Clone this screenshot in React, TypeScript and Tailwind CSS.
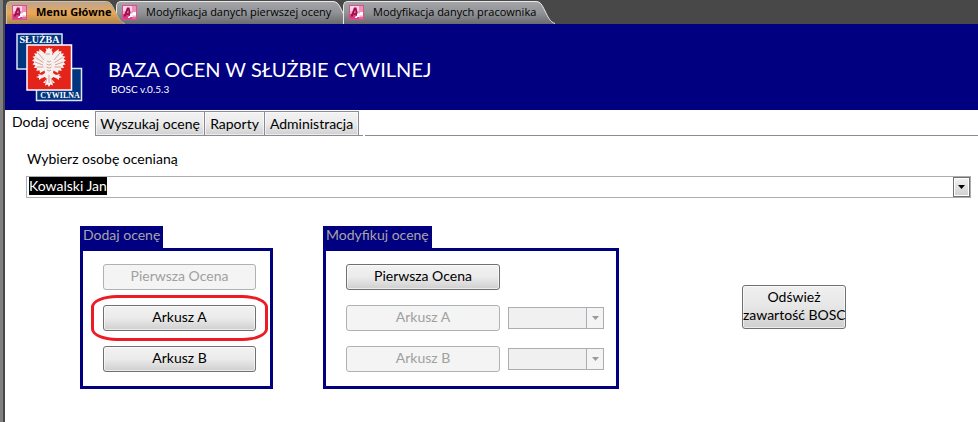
import React from "react";

const font = "font-['Lato','Liberation_Sans',sans-serif]";

function AccessIcon() {
  return (
    <svg width="15" height="15" viewBox="0 0 15 15" className="shrink-0" aria-hidden="true">
      <rect x="0.500" y="0.500" width="14" height="14" fill="#f7a8cc" stroke="#d8508c" />
      <path d="M1 1h13v5H1z" fill="#fbd3e5" />
      <path d="M1 9h9v5H1z" fill="#d93f86" />
      <path d="M10 1h4v6h-4z" fill="#f08fbb" />
      <path fillRule="evenodd" d="M1.500 11.500 5 2.500h2.500l1.800 9H7L6.700 9.700H4.500L3.800 11.500zM5.100 8h1.400L6.200 5z" fill="#a30f4e" />
      <path d="M8 8.500h2.500l1-1.500H14v3.500h-2.500l-1-.5v2H8.500l-1 1H6v-1l2-1.500z" fill="#fff" />
      <path d="M10 12h4v2h-4z" fill="#e06aa0" />
    </svg>
  );
}

type DocTabProps = { label: string; active?: boolean; width: string };

function DocTab({ label, active, width }: DocTabProps) {
  const id = active ? "tab-on" : "tab-off";
  return (
    <button type="button" className={`relative flex h-[23px] items-center gap-2 pl-[6px] ${width} ${active ? "z-10" : ""}`}>
      <span className="absolute inset-0 flex" aria-hidden="true">
        <span
          className={`flex-1 rounded-tl-[5px] border-t border-l ${
            active
              ? "border-[#d8c0a0] bg-linear-to-b from-[#b8a490] via-[#eda850] to-[#a98658]"
              : "border-[#e8e8e8] bg-linear-to-b from-[#a5a5a8] via-[#909296] to-[#6a6b6e]"
          }`}
        />
        <svg width="20" height="23" viewBox="0 0 20 23">
          <defs>
            <linearGradient id={id} x1="0" y1="0" x2="0" y2="1">
              <stop offset="0" stopColor={active ? "#b8a490" : "#a5a5a8"} />
              <stop offset="0.5" stopColor={active ? "#eda850" : "#909296"} />
              <stop offset="1" stopColor={active ? "#a98658" : "#6a6b6e"} />
            </linearGradient>
          </defs>
          <path d="M0 0C6 0 7 4 10 10S15 21 20 23H0z" fill={`url(#${id})`} />
          <path d="M0 .5C6 .5 7 4 10 10S15 21 20 22.500" fill="none" stroke={active ? "#c8b090" : "#e8e8e8"} />
        </svg>
      </span>
      <span className="relative flex items-center gap-[9px]">
        <AccessIcon />
        <span className={`font-['Open_Sans','Noto_Sans',sans-serif] text-[11px] whitespace-nowrap text-black ${active ? "font-bold" : ""}`}>
          {label}
        </span>
      </span>
    </button>
  );
}

function Emblem() {
  return (
    <svg width="68" height="70" viewBox="0 0 68 70" className="shrink-0" role="img" aria-label="Służba Cywilna">
      <rect x="1" y="1" width="45" height="35" fill="#003580" stroke="#dce6f2" strokeWidth="1.500" />
      <rect x="20.500" y="35.500" width="45" height="32" fill="#003580" stroke="#dce6f2" strokeWidth="1.500" />
      <rect x="11" y="12" width="44.500" height="45" fill="#e4231b" stroke="#fff" strokeWidth="1.500" />
      <g id="eagle" fill="#f6f1ef">
        <path d="M30.500 17.500 29.500 15l2 1 1.500-1.500L34.500 16l2-1-1 2.500c1.500 1 1.500 3 .5 4.500v4h-6v-4l-2.500-.5 2-1.500c-.2-1 0-1.800 1-2.500z" />
        <path d="M31 25c-1-4-4-7-8-9l.5 2.500-3-.5.5 2.500-3 0 1.500 2.500-3 .8 2 2-2.500 1.700 2.500 1.500-2 2.500 2.800.8-1.300 2.700 3 0-.6 3 3-.8.6 2.800 5.500-3z" />
        <path d="M35 25c1-4 4-7 8-9l-.5 2.500 3-.5-.5 2.500 3 0-1.500 2.500 3 .8-2 2 2.500 1.700-2.500 1.500 2 2.500-2.800.8 1.300 2.700-3 0 .6 3-3-.8-.6 2.800-5.500-3z" />
        <path d="M29 24h8l1.500 8-1.500 8 3 2 4-1-1 2 3 1-3 1 0 2-3-2-3-1-1.500 2 3.500 4-2.500 0 .5 2.500-2.500-1L33 54l-1.500-2.500-2.500 1 .5-2.500-2.500 0 3.500-4-1.500-2-3 1-3 2 0-2-3-1 3-1-1-2 4 1 3-2-1.500-8z" />
      </g>
      <g fill="none" stroke="#d08c84" strokeWidth="0.800">
        <path d="M22 20l6 7M19.500 24.500l8 5M19 29l8 3M20.500 34l7 0M44 20l-6 7M46.500 24.500l-8 5M47 29l-8 3M45.500 34l-7 0" />
        <path d="M31 28l2 1 2-1M30.500 31l2.500 1.200 2.500-1.200M30.500 34l2.500 1.200 2.500-1.200M31 37l2 1 2-1M33 42v8M31 45l-1.500 5M35 45l1.500 5M30 21h4" />
      </g>
      <text x="23.500" y="9.500" textAnchor="middle" fill="#fff" className="font-['Liberation_Serif',serif] text-[10px] font-bold">SŁUŻBA</text>
      <text x="44" y="65" textAnchor="middle" fill="#fff" className="font-['Liberation_Serif',serif] text-[8px] font-bold">CYWILNA</text>
    </svg>
  );
}

type FormButtonProps = { label: string; disabled?: boolean };

function FormButton({ label, disabled }: FormButtonProps) {
  return (
    <button
      type="button"
      disabled={disabled}
      className={`block h-[26px] w-full rounded-[3px] border pb-[2px] text-center text-sm leading-none ${
        disabled
          ? "border-[#adb2b5] bg-[#f4f4f4] text-[#a0a0a0]"
          : "border-[#707070] bg-linear-to-b from-[#f2f2f2] from-0% via-[#ebebeb] via-50% to-[#cfcfcf] text-black inset-ring inset-ring-white/60"
      }`}
    >
      {label}
    </button>
  );
}

function VersionSelect({ label }: { label: string }) {
  return (
    <div className="relative">
      <select disabled aria-label={label} className="block h-[22px] w-24 appearance-none border border-[#abadb3] bg-[#f0f0f0]" />
      <span className="pointer-events-none absolute inset-y-0 right-0 flex w-[18px] items-center justify-center border border-[#abadb3] bg-[#f4f4f4]">
        <svg width="7" height="4" viewBox="0 0 7 4"><path d="M0 0h7L3.500 4z" fill="#9a9a9a" /></svg>
      </span>
    </div>
  );
}

type GroupProps = { title: string; width: string; titleWidth: string; children: React.ReactNode };

function Group({ title, width, titleWidth, children }: GroupProps) {
  return (
    <fieldset className={`min-w-0 shrink-0 ${width}`}>
      <legend className={`h-[22px] bg-[#000080] px-[3px] text-sm leading-[18px] whitespace-nowrap text-[#a6a6a6] ${titleWidth}`}>{title}</legend>
      <div className="border-3 border-[#000080] pt-[13px] pr-[14px] pb-[14px] pl-5">{children}</div>
    </fieldset>
  );
}

const pageTabs = [
  { label: "Wyszukaj ocenę", width: "w-[110px]" },
  { label: "Raporty", width: "w-[61px]" },
  { label: "Administracja", width: "w-[95px]" },
];

export default function App() {
  return (
    <div className={`flex min-h-screen bg-white ${font}`}>
      <div className="w-[5px] shrink-0 border-r-2 border-[#484848] bg-[#808080]" />
      <div className="min-w-0 flex-1">
        <nav className="flex h-6 items-end bg-[#484848] pl-px">
          <DocTab label="Menu Główne" active width="w-[119px]" />
          <DocTab label="Modyfikacja danych pierwszej oceny" width="-ml-[9px] w-[236px]" />
          <DocTab label="Modyfikacja danych pracownika" width="-ml-[9px] w-[212px]" />
        </nav>

        <header className="flex h-[86px] items-start bg-[#000080] pt-[9px] pl-[11px] text-white">
          <Emblem />
          <div className="pt-6 pl-6">
            <h1 className="text-xl leading-6">BAZA OCEN W SŁUŻBIE CYWILNEJ</h1>
            <p className="pl-[3px] text-[10px] leading-4">BOSC v.0.5.3</p>
          </div>
        </header>

        <div role="tablist" className="flex h-[26px] items-end text-sm">
          <button type="button" role="tab" aria-selected="true" className="h-[26px] w-[90px] pb-[2px] pl-[7px] text-left leading-6 whitespace-nowrap">
            Dodaj ocenę
          </button>
          <div className="flex border-b border-[#8b8b98] pr-[5px]">
            {pageTabs.map((t) => (
              <button
                key={t.label}
                type="button"
                role="tab"
                aria-selected="false"
                className={`-mr-px h-6 border border-b-0 border-[#8b8b98] bg-linear-to-b from-[#f2f2f2] via-[#ebebeb] to-[#d0d0d0] text-center whitespace-nowrap inset-ring inset-ring-white/60 ${t.width}`}
              >
                {t.label}
              </button>
            ))}
          </div>
          <div className="ml-[2px] flex-1 border-b border-[#8b8b98]" />
        </div>

        <main className="pt-[13px] pr-[7px] pl-[21px] text-sm">
          <label htmlFor="person" className="block pl-px leading-5">Wybierz osobę ocenianą</label>
          <div className="relative mt-[7px] flex h-[22px] border border-[#abadb3] pl-[2px]">
            <span aria-hidden="true" className="h-[18px] bg-black text-sm leading-[18px] text-white">Kowalski Jan</span>
            <select id="person" className="absolute inset-0 w-full appearance-none bg-transparent text-transparent">
              <option>Kowalski Jan</option>
            </select>
            <span className="pointer-events-none absolute inset-y-0 right-0 flex w-[17px] items-center justify-center border border-[#707070] bg-linear-to-b from-[#f2f2f2] to-[#d0d0d0] inset-ring inset-ring-white">
              <svg width="7" height="4" viewBox="0 0 7 4"><path d="M0 0h7L3.500 4z" /></svg>
            </span>
          </div>

          <div className="mt-7 flex items-start pl-[54px]">
            <Group title="Dodaj ocenę" width="w-[193px]" titleWidth="w-[83px]">
              <div className="flex flex-col gap-[15px]">
                <FormButton label="Pierwsza Ocena" disabled />
                <div className="relative">
                  <FormButton label="Arkusz A" />
                  <div className="pointer-events-none absolute -inset-x-3 -inset-y-[10px] rounded-[26px/12px] border-3 border-[#ed1c24]" />
                </div>
                <FormButton label="Arkusz B" />
              </div>
            </Group>

            <div className="ml-[50px] shrink-0">
              <Group title="Modyfikuj ocenę" width="w-[296px]" titleWidth="w-[109px]">
                <div className="grid grid-cols-[154px_96px] items-center gap-x-2 gap-y-[15px]">
                  <FormButton label="Pierwsza Ocena" />
                  <span />
                  <FormButton label="Arkusz A" disabled />
                  <VersionSelect label="Arkusz A" />
                  <FormButton label="Arkusz B" disabled />
                  <VersionSelect label="Arkusz B" />
                </div>
              </Group>
            </div>

            <button
              type="button"
              className="mt-[59px] ml-[123px] h-11 w-[104px] shrink-0 rounded-[3px] border border-[#707070] bg-linear-to-b from-[#f0f0f0] from-0% via-[#e6e6e6] via-50% to-[#cfcfcf] pb-[2px] text-sm leading-[18px] whitespace-nowrap inset-ring inset-ring-white/60"
            >
              Odśwież
              <br />
              zawartość BOSC
            </button>
          </div>
        </main>
      </div>
    </div>
  );
}
